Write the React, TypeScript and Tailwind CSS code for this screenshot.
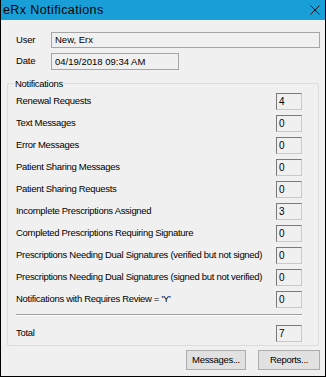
import React from "react";

const rows: [string, string][] = [
  ["Renewal Requests", "4"],
  ["Text Messages", "0"],
  ["Error Messages", "0"],
  ["Patient Sharing Messages", "0"],
  ["Patient Sharing Requests", "0"],
  ["Incomplete Prescriptions Assigned", "3"],
  ["Completed Prescriptions Requiring Signature", "0"],
  ["Prescriptions Needing Dual Signatures (verified but not signed)", "0"],
  ["Prescriptions Needing Dual Signatures (signed but not verified)", "0"],
  ["Notifications with Requires Review = 'Y'", "0"],
];

function CountBox({ value }: { value: string }) {
  return (
    <div className="w-[26px] h-[17px] shrink-0 border border-t-[#7a7a7a] border-l-[#7a7a7a] border-r-[#c9c9c9] border-b-[#c9c9c9] bg-[#f0f0f0] px-[2px] leading-[15px] text-[10px]">
      {value}
    </div>
  );
}

function Row({ label, value }: { label: string; value: string }) {
  return (
    <div className="h-[22px] flex items-center justify-between">
      <span className="whitespace-nowrap tracking-[-0.3px]">{label}</span>
      <CountBox value={value} />
    </div>
  );
}

export default function App() {
  return (
    <div
      className="w-[326px] h-[377px] bg-[#f0f0f0] border-x border-b border-black flex flex-col text-[9.5px] text-black"
      style={{ fontFamily: '"Liberation Sans", Arial, sans-serif' }}
    >
      <div className="h-[20px] shrink-0 bg-[#199fd7] flex items-center justify-between pl-[2px] pr-[5px] text-[12.5px] tracking-[0.4px]">
        <span>eRx Notifications</span>
        <svg width="10" height="10" viewBox="0 0 10 10">
          <path d="M0.5 0.5 L9.5 9.5 M9.5 0.5 L0.5 9.5" stroke="#111" strokeWidth="1" />
        </svg>
      </div>

      <div className="pl-[15px] pr-[5px] pt-[12px] flex flex-col gap-[5px]">
        <div className="flex items-center">
          <span className="w-[35px] tracking-[-0.2px]">User</span>
          <div className="flex-1 h-[16px] border border-[#a5a5a5] bg-[#f0f0f0] pl-[3px] leading-[14px]">
            New, Erx
          </div>
        </div>
        <div className="flex items-center">
          <span className="w-[35px] tracking-[-0.2px]">Date</span>
          <div className="w-[128px] h-[17px] border border-[#a5a5a5] bg-[#f0f0f0] pl-[3px] leading-[15px]">
            04/19/2018 09:34 AM
          </div>
        </div>
      </div>

      <div className="relative mt-[13px] mx-[6px] h-[263px] shrink-0 border border-[#dcdcdc] rounded-[2px] pt-[6px] pl-[8px] pr-[16px]">
        <span className="absolute -top-[7px] left-[6px] bg-[#f0f0f0] px-[1px] tracking-[-0.3px]">
          Notifications
        </span>
        {rows.map(([label, value]) => (
          <Row key={label} label={label} value={value} />
        ))}
        <div className="mt-[4px] border-t border-[#a0a0a0] border-b border-b-white" />
        <div className="mt-[6px]">
          <Row label="Total" value="7" />
        </div>
      </div>

      <div className="flex justify-end gap-[12px] pr-[5px] mt-[4px]">
        <button className="w-[60px] h-[20px] bg-[#e1e1e1] border border-[#adadad] tracking-[-0.3px]">
          Messages...
        </button>
        <button className="w-[62px] h-[20px] bg-[#e1e1e1] border border-[#adadad] tracking-[-0.3px]">
          Reports...
        </button>
      </div>
    </div>
  );
}
